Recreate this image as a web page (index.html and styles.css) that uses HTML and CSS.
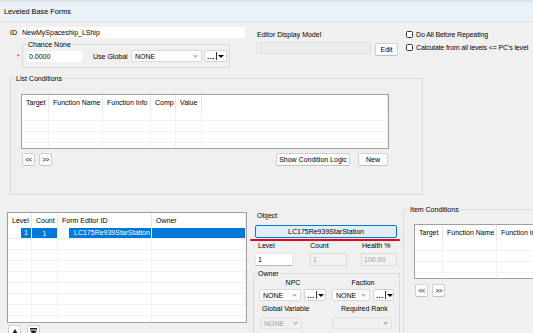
FILE: index.html
```html
<!DOCTYPE html>
<html lang="en">
  <head>
    <meta charset="UTF-8" />
    <meta name="viewport" content="width=device-width, initial-scale=1.0" />
    <title>Leveled Base Forms</title>
    <link rel="stylesheet" href="styles.css">
  </head>
  <body>
    <div class="window">
      <div class="titlebar">Leveled Base Forms</div>

      <!-- ID, chance none, model and flags -->
      <div class="top">
        <div class="ident">
          <div class="id-row">
            <span class="id-label">ID</span>
            <div class="field id-field">NewMySpaceship_LShip</div>
          </div>
          <div class="chance-row">
            <span class="req">*</span>
            <fieldset class="group chance">
              <legend>Chance None</legend>
              <div class="chance-body">
                <div class="field chance-field">0.0000</div>
                <span class="use-global">Use Global</span>
                <div class="select global-select">NONE<i class="chev"></i></div>
                <div class="more">...<i class="bar"></i><i class="tri"></i></div>
              </div>
            </fieldset>
          </div>
        </div>

        <div class="model">
          <div class="model-label">Editor Display Model</div>
          <div class="model-row">
            <div class="field model-field"></div>
            <button class="btn edit-btn">Edit</button>
          </div>
        </div>

        <div class="opts">
          <div class="check"><i class="box"></i>Do All Before Repeating</div>
          <div class="check"><i class="box"></i>Calculate from all levels &lt;= PC's level</div>
        </div>
      </div>

      <!-- List conditions -->
      <fieldset class="group list-cond">
        <legend>List Conditions</legend>
        <div class="grid cond-grid">
          <table>
            <colgroup>
              <col style="width:27px"><col style="width:54px"><col style="width:48px">
              <col style="width:25px"><col style="width:26px"><col>
            </colgroup>
            <tr><th>Target</th><th>Function Name</th><th>Function Info</th><th>Comp</th><th>Value</th><th></th></tr>
            <tr><td></td><td></td><td></td><td></td><td></td><td></td></tr>
            <tr><td></td><td></td><td></td><td></td><td></td><td></td></tr>
            <tr><td></td><td></td><td></td><td></td><td></td><td></td></tr>
            <tr><td></td><td></td><td></td><td></td><td></td><td></td></tr>
          </table>
        </div>
        <div class="cond-buttons">
          <div class="pager">
            <button class="btn nav">&lt;&lt;</button>
            <button class="btn nav">&gt;&gt;</button>
          </div>
          <div class="actions">
            <button class="btn logic">Show Condition Logic</button>
            <button class="btn new">New</button>
          </div>
        </div>
      </fieldset>

      <div class="bottom">
        <!-- Entries list -->
        <div class="entries">
          <div class="grid entry-grid">
            <table>
              <colgroup>
                <col style="width:24px"><col style="width:26px"><col style="width:94px"><col>
              </colgroup>
              <tr><th>Level</th><th>Count</th><th>Form Editor ID</th><th>Owner</th></tr>
              <tr class="selected">
                <td><span class="hl lvl">1</span></td>
                <td class="sel center">1</td>
                <td><span class="hl form">LC175Re939StarStation</span></td>
                <td class="sel"></td>
              </tr>
              <tr><td></td><td></td><td></td><td></td></tr>
              <tr><td></td><td></td><td></td><td></td></tr>
              <tr><td></td><td></td><td></td><td></td></tr>
              <tr><td></td><td></td><td></td><td></td></tr>
              <tr><td></td><td></td><td></td><td></td></tr>
              <tr><td></td><td></td><td></td><td></td></tr>
              <tr><td></td><td></td><td></td><td></td></tr>
              <tr><td></td><td></td><td></td><td></td></tr>
            </table>
          </div>
          <div class="entry-buttons">
            <button class="btn arrow">
              <svg width="6" height="5" viewBox="0 0 6 5"><polygon points="3,0 6,5 0,5" fill="#222"/></svg>
            </button>
            <button class="btn arrow">
              <svg width="7" height="7" viewBox="0 0 7 7"><rect x="0" y="0" width="7" height="1.5" fill="#222"/><polygon points="0,2.5 7,2.5 3.5,7" fill="#222"/></svg>
            </button>
          </div>
        </div>

        <!-- Selected object -->
        <div class="object-col">
          <div class="obj-label">Object</div>
          <button class="obj-btn">LC175Re939StarStation</button>
          <div class="redline"></div>
          <div class="stats">
            <span class="st-label lv">Level</span>
            <span class="st-label">Count</span>
            <span class="st-label hp">Health %</span>
            <div class="field level-in">1</div>
            <div class="field off count-in">1</div>
            <div class="field off health-in">100.00</div>
          </div>
          <fieldset class="group owner">
            <legend>Owner</legend>
            <div class="owner-grid">
              <span class="own-label">NPC</span>
              <span class="own-label">Faction</span>
              <div class="pick">
                <div class="select npc-select">NONE<i class="chev"></i></div>
                <div class="more small-more">...<i class="bar"></i><i class="tri"></i></div>
              </div>
              <div class="pick">
                <div class="select fac-select">NONE<i class="chev"></i></div>
                <div class="more small-more">...<i class="bar"></i><i class="tri"></i></div>
              </div>
              <span class="own-label gv">Global Variable</span>
              <span class="own-label rr">Required Rank</span>
              <div class="select off gv-select">NONE<i class="chev"></i></div>
              <div class="select off rank-select"><i class="chev"></i></div>
            </div>
          </fieldset>
        </div>

        <!-- Item conditions -->
        <fieldset class="group item-cond">
          <legend>Item Conditions</legend>
          <div class="grid item-grid">
            <table>
              <colgroup>
                <col style="width:28px"><col style="width:54px"><col>
              </colgroup>
              <tr><th>Target</th><th>Function Name</th><th>Function Info</th></tr>
              <tr><td></td><td></td><td></td></tr>
              <tr><td></td><td></td><td></td></tr>
              <tr><td></td><td></td><td></td></tr>
              <tr><td></td><td></td><td></td></tr>
            </table>
          </div>
          <div class="pager item-pager">
            <button class="btn nav">&lt;&lt;</button>
            <button class="btn nav">&gt;&gt;</button>
          </div>
        </fieldset>
      </div>
    </div>
  </body>
</html>
```

FILE: styles.css
```css
* {
  box-sizing: border-box;
}

body {
  margin: 0;
  background-color: #f0f0f0;
  font-family: "Liberation Sans", Arial, sans-serif;
  font-size: 7px;
  color: #000;
  overflow: hidden;
}

.window {
  width: 533px;
  height: 333px;
  overflow: hidden;
}

/* Title bar */
.titlebar {
  height: 22px;
  line-height: 19px;
  padding-left: 4px;
  font-size: 7.3px;
  background-color: #e9f2f8;
  border-top: 2px solid #e2e2e2;
  border-bottom: 1px solid #dedede;
}

/* Shared controls */
.field {
  height: 11px;
  line-height: 11px;
  padding-left: 2px;
  background-color: #fff;
  white-space: nowrap;
  overflow: hidden;
}

.field.off {
  background-color: #f2f2f2;
  border: 1px solid #dcdcdc;
  color: #a0a0a0;
  line-height: 11px;
}

.select {
  display: flex;
  align-items: center;
  height: 12px;
  padding-left: 3px;
  background-color: #fff;
  border: 1px solid #dadada;
  border-radius: 2px;
}

.select.off {
  background-color: #f0f0f0;
  border-color: #e2e2e2;
  color: #a0a0a0;
}

.chev {
  width: 3px;
  height: 3px;
  margin: -2px 4px 0 auto;
  border-right: 1px solid #999;
  border-bottom: 1px solid #999;
  transform: rotate(45deg);
}

.more {
  display: flex;
  align-items: center;
  height: 12px;
  padding-left: 2px;
  background-color: #fff;
  border: 1px solid #d4d4d4;
  border-radius: 2px;
  font-size: 8px;
  font-weight: bold;
  letter-spacing: 0.3px;
}

.more .bar {
  width: 1px;
  height: 8px;
  margin-left: 1px;
  background-color: #333;
}

.more .tri {
  margin-left: 1px;
  border-left: 3px solid transparent;
  border-right: 3px solid transparent;
  border-top: 3.5px solid #000;
}

.btn {
  height: 13px;
  padding: 0;
  font: inherit;
  color: #000;
  background-color: #fdfdfd;
  border: 1px solid #d0d0d0;
  border-bottom-color: #c0c0c0;
  border-radius: 2px;
  white-space: nowrap;
}

fieldset.group {
  margin: 0;
  padding: 0;
  min-width: 0;
  border: 1px solid #dcdcdc;
}

fieldset.group legend {
  padding: 0 1px;
  margin-left: 4px;
  line-height: 9px;
}

/* Top section */
.top {
  display: flex;
  height: 48px;
}

.ident {
  width: 245px;
  flex-shrink: 0;
  padding-left: 10px;
  padding-top: 5px;
}

.id-row {
  display: flex;
  align-items: center;
  height: 11px;
}

.id-label {
  width: 10px;
}

.id-field {
  flex: 1;
}

.chance-row {
  display: flex;
  margin-top: 2px;
  margin-left: 7px;
}

.req {
  width: 5px;
  padding-top: 13px;
  color: #e0202a;
  font-size: 7px;
  line-height: 7px;
}

.chance {
  width: 208px;
  height: 28px;
}

.chance-body {
  display: flex;
  align-items: center;
  height: 12px;
  margin-top: 1px;
  padding-left: 4px;
}

.chance-field {
  width: 55px;
}

.use-global {
  width: 38px;
  margin-left: 11px;
}

.global-select {
  width: 71px;
}

.chance .more {
  width: 23px;
  margin-left: 2px;
}

.model {
  width: 143px;
  flex-shrink: 0;
  margin-left: 10px;
  padding-top: 8px;
}

.model-label {
  line-height: 9px;
  padding-left: 2px;
}

.model-row {
  display: flex;
  margin-top: 3px;
}

.model-field {
  width: 115px;
  height: 12px;
  margin-left: 1px;
  background-color: #ebebeb;
  border: 1px solid #e2e2e2;
}

.edit-btn {
  width: 23px;
  margin-left: 4px;
  margin-top: 1px;
}

.opts {
  margin-left: 8px;
  padding-top: 8px;
  white-space: nowrap;
  letter-spacing: -0.12px;
}

.check {
  display: flex;
  align-items: center;
  gap: 3px;
  height: 9px;
}

.check + .check {
  margin-top: 4px;
}

.box {
  width: 7px;
  height: 7px;
  background-color: #fff;
  border: 1px solid #333;
  border-radius: 1.5px;
}

/* Grids (list views) */
.grid {
  background-color: #fff;
  border: 1px solid #a0a0a0;
  overflow: hidden;
}

.grid table {
  width: 100%;
  table-layout: fixed;
  border-collapse: separate;
  border-spacing: 0;
}

.grid th {
  height: 15px;
  padding: 0 0 0 4px;
  text-align: left;
  font-weight: normal;
  white-space: nowrap;
  overflow: hidden;
  border-right: 1px solid #e6e6e6;
}

.grid td {
  height: 11px;
  padding: 0;
  white-space: nowrap;
  border-right: 1px solid #f0f0f0;
  border-bottom: 1px solid #f0f0f0;
}

/* List conditions */
.list-cond {
  width: 413px;
  height: 121px;
  margin-top: 4px !important;
  margin-left: 10px !important;
}

.cond-grid {
  width: 368px;
  height: 55px;
  margin-top: 11px;
  margin-left: 10px;
}

.cond-buttons {
  display: flex;
  justify-content: space-between;
  width: 366px;
  margin-top: 4px;
  margin-left: 11px;
}

.pager,
.actions {
  display: flex;
  gap: 4px;
}

.actions {
  gap: 8px;
}

.nav {
  width: 13px;
  font-size: 6.5px;
  letter-spacing: -0.5px;
}

.logic {
  width: 74px;
}

.new {
  width: 30px;
}

/* Bottom section */
.bottom {
  display: flex;
}

.entries {
  flex-shrink: 0;
  margin-left: 7px;
  padding-top: 17px;
}

.entry-grid {
  width: 240px;
  height: 111px;
}

.selected td.sel,
.hl {
  background-color: #0078d7;
  color: #fff;
}

.hl {
  display: block;
  height: 10px;
  line-height: 10px;
}

.hl.lvl {
  margin-left: 13px;
  padding-left: 3px;
}

.hl.form {
  margin-left: 11px;
  padding-left: 5px;
}

.center {
  text-align: center;
}

.entry-buttons {
  display: flex;
  gap: 6px;
  margin-top: 2px;
  margin-left: 1px;
}

.arrow {
  display: flex;
  align-items: center;
  justify-content: center;
  width: 13px;
}

.object-col {
  width: 150px;
  flex-shrink: 0;
  margin-left: 3px;
  padding-top: 16px;
}

.obj-label {
  line-height: 9px;
  padding-left: 7px;
}

.obj-btn {
  display: block;
  width: 142px;
  height: 13px;
  margin-top: 5px;
  margin-left: 5px;
  padding: 0;
  font: inherit;
  color: #000;
  background-color: #e0eef9;
  border: 1px solid #0078d4;
  border-radius: 2px;
}

.redline {
  height: 2px;
  margin-top: 1px;
  background-color: #e3001b;
  border-radius: 1px;
}

.stats {
  display: grid;
  grid-template-columns: 55px 51px 36px;
  row-gap: 3px;
  margin-left: 5px;
}

.st-label {
  line-height: 9px;
}

.st-label.lv {
  padding-left: 3px;
}

.st-label.hp {
  padding-left: 1px;
}

.stats .field {
  height: 13px;
  line-height: 12px;
}

.level-in {
  width: 38px;
  border: 1px solid #e6e6e6;
  border-bottom-color: #b8b8b8;
}

.count-in {
  width: 37px;
}

.health-in {
  width: 36px;
}

.owner {
  width: 147px;
  height: 70px;
  margin-top: 3px !important;
  margin-left: 3px !important;
}

.owner legend {
  margin-left: 3px !important;
}

.owner-grid {
  display: grid;
  grid-template-columns: 68px 62px;
  column-gap: 5px;
  padding-left: 5px;
}

.own-label {
  line-height: 9px;
  text-align: center;
}

.pick {
  display: flex;
  margin-top: 2px;
}

.npc-select {
  width: 42px;
}

.fac-select {
  width: 40px;
}

.small-more {
  width: 22px;
  margin-left: 3px;
}

.own-label.gv {
  margin-top: 3px;
  text-align: left;
  padding-left: 3px;
}

.own-label.rr {
  margin-top: 3px;
  text-align: left;
  padding-left: 9px;
}

.gv-select {
  width: 42px;
  margin-top: 4px;
  margin-left: 1px;
}

.rank-select {
  width: 60px;
  margin-top: 4px;
}

.item-cond {
  width: 140px;
  height: 140px;
  flex-shrink: 0;
  margin-top: 10px !important;
  margin-left: 3px !important;
}

.item-cond legend {
  margin-left: 5px !important;
}

.item-grid {
  width: 130px;
  height: 55px;
  margin-top: 10px;
  margin-left: 10px;
}

.item-pager {
  margin-top: 5px;
  margin-left: 11px;
}
```
